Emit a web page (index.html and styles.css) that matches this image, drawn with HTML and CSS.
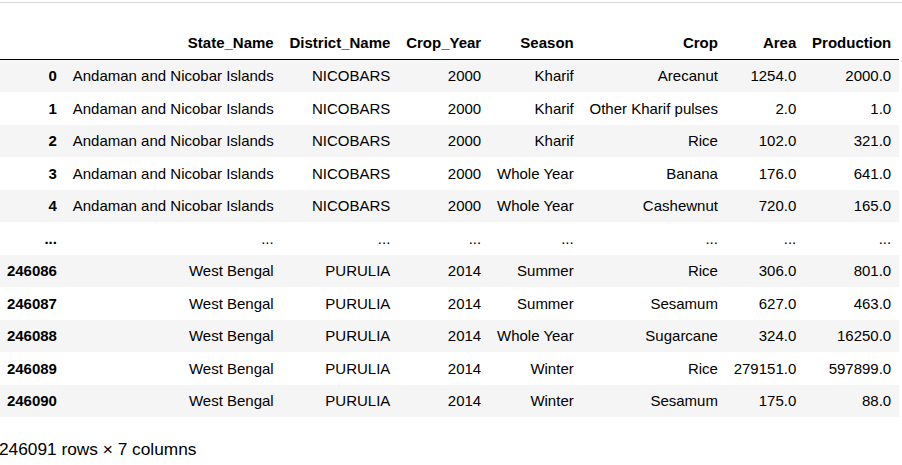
FILE: index.html
```html
<!DOCTYPE html>
<html>
<head>
<meta charset="utf-8">
<link rel="stylesheet" href="styles.css">
</head>
<body>
<div class="output">
<table class="dataframe">
<thead>
<tr><th class="idx"></th><th>State_Name</th><th>District_Name</th><th>Crop_Year</th><th>Season</th><th>Crop</th><th>Area</th><th>Production</th></tr>
</thead>
<tbody>
<tr><th>0</th><td>Andaman and Nicobar Islands</td><td>NICOBARS</td><td>2000</td><td>Kharif</td><td>Arecanut</td><td>1254.0</td><td>2000.0</td></tr>
<tr><th>1</th><td>Andaman and Nicobar Islands</td><td>NICOBARS</td><td>2000</td><td>Kharif</td><td>Other Kharif pulses</td><td>2.0</td><td>1.0</td></tr>
<tr><th>2</th><td>Andaman and Nicobar Islands</td><td>NICOBARS</td><td>2000</td><td>Kharif</td><td>Rice</td><td>102.0</td><td>321.0</td></tr>
<tr><th>3</th><td>Andaman and Nicobar Islands</td><td>NICOBARS</td><td>2000</td><td>Whole Year</td><td>Banana</td><td>176.0</td><td>641.0</td></tr>
<tr><th>4</th><td>Andaman and Nicobar Islands</td><td>NICOBARS</td><td>2000</td><td>Whole Year</td><td>Cashewnut</td><td>720.0</td><td>165.0</td></tr>
<tr><th>...</th><td>...</td><td>...</td><td>...</td><td>...</td><td>...</td><td>...</td><td>...</td></tr>
<tr><th>246086</th><td>West Bengal</td><td>PURULIA</td><td>2014</td><td>Summer</td><td>Rice</td><td>306.0</td><td>801.0</td></tr>
<tr><th>246087</th><td>West Bengal</td><td>PURULIA</td><td>2014</td><td>Summer</td><td>Sesamum</td><td>627.0</td><td>463.0</td></tr>
<tr><th>246088</th><td>West Bengal</td><td>PURULIA</td><td>2014</td><td>Whole Year</td><td>Sugarcane</td><td>324.0</td><td>16250.0</td></tr>
<tr><th>246089</th><td>West Bengal</td><td>PURULIA</td><td>2014</td><td>Winter</td><td>Rice</td><td>279151.0</td><td>597899.0</td></tr>
<tr><th>246090</th><td>West Bengal</td><td>PURULIA</td><td>2014</td><td>Winter</td><td>Sesamum</td><td>175.0</td><td>88.0</td></tr>
</tbody>
</table>
<p class="shape">246091 rows × 7 columns</p>
</div>
</body>
</html>
```
FILE: styles.css
```css
html, body {
  margin: 0;
  padding: 0;
  background: #ffffff;
}
body {
  font-family: "Liberation Sans", Arial, sans-serif;
  font-size: 15px;
  color: #000;
}
.output {
  margin-top: 2px;
  border-top: 1px solid #dcdcdc;
  padding-top: 23px;
}
.dataframe {
  border: none;
  border-collapse: collapse;
  border-spacing: 0;
  color: #000;
  font-size: 15px;
  table-layout: auto;
  margin-left: -1px;
}
.dataframe th,
.dataframe td {
  text-align: right;
  vertical-align: middle;
  padding: 7.5px 7.9px;
  line-height: 17.5px;
  white-space: nowrap;
  border: none;
}
.dataframe th {
  font-weight: bold;
}
.dataframe thead {
  border-bottom: 1px solid #000;
  vertical-align: bottom;
}
.dataframe tbody tr:nth-child(odd) {
  background: #f5f5f5;
}
.shape {
  margin: 22px 0 0 -1px;
  line-height: 20px;
  font-size: 17.3px;
  color: #000;
}
```
